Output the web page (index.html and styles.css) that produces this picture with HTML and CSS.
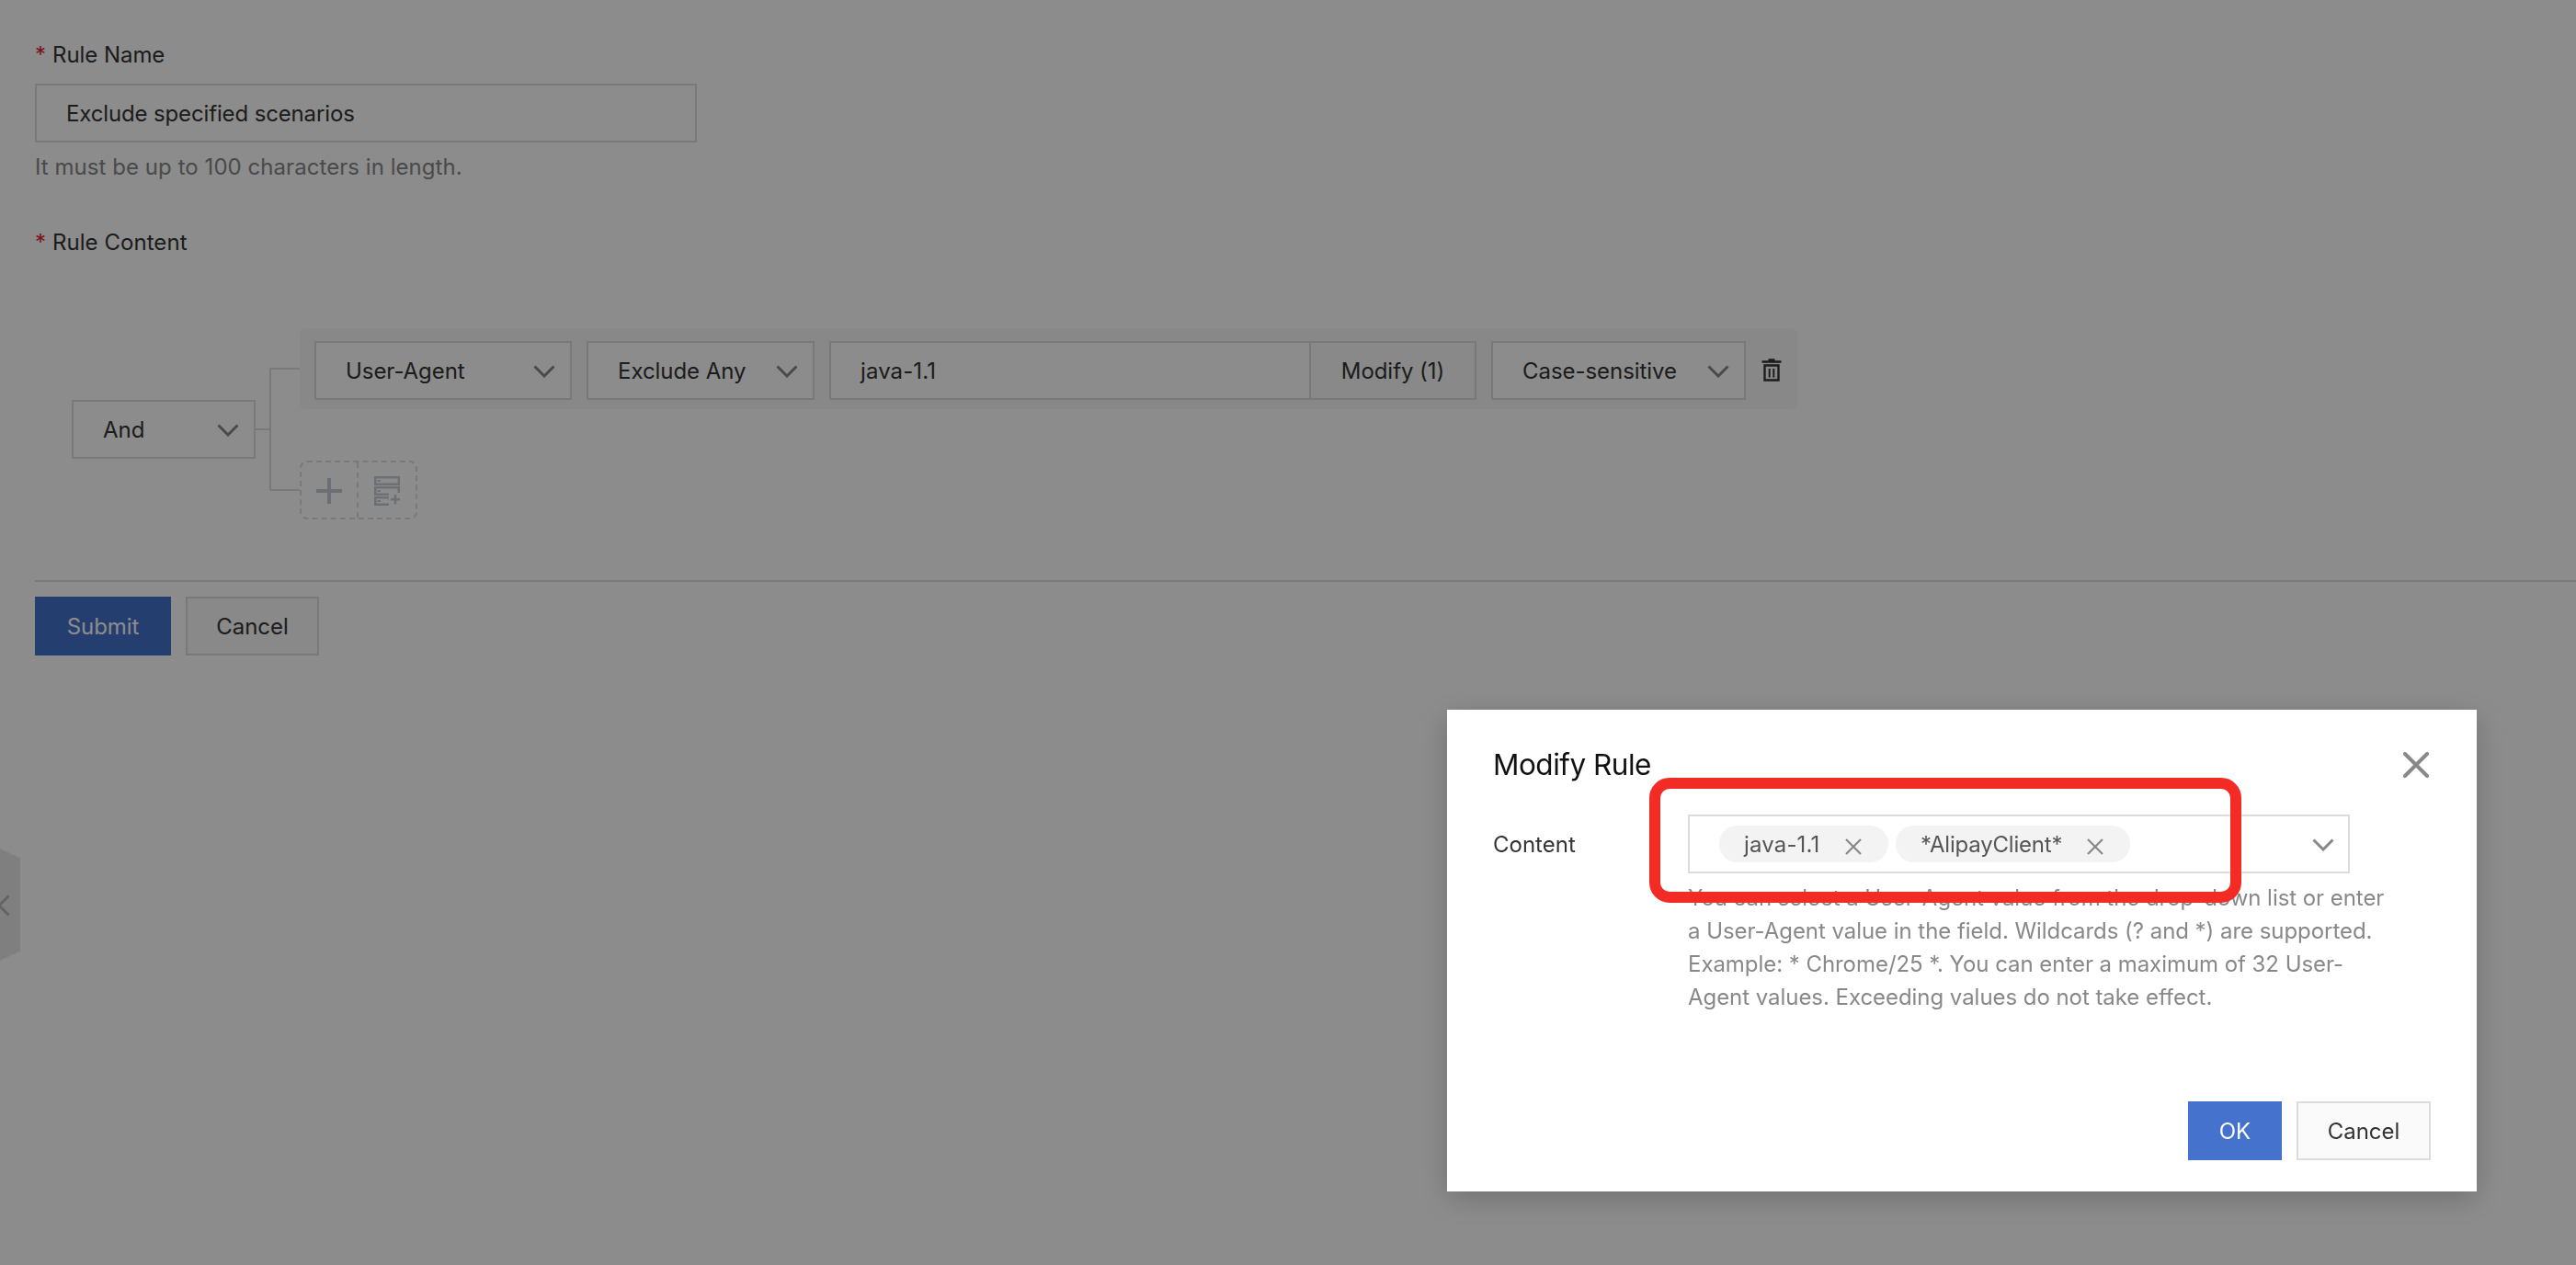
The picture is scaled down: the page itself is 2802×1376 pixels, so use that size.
FILE: index.html
```html
<!DOCTYPE html>
<html lang="en">
<head>
    <meta charset="UTF-8">
    <meta name="viewport" content="width=device-width, initial-scale=1.0">
    <title>Modify Rule</title>
    <link rel="stylesheet" href="styles.css">
</head>
<body>
    <main class="page">
        <div class="label"><span class="required">*</span><span>Rule Name</span></div>
        <div class="field name-field">Exclude specified scenarios</div>
        <p class="help">It must be up to 100 characters in length.</p>

        <div class="label content-label"><span class="required">*</span><span>Rule Content</span></div>
        <div class="rule">
            <div class="field select and-select">
                <span>And</span>
                <svg class="chevron" viewBox="0 0 24 14"><path d="M1.5 1.5L12 12L22.5 1.5"/></svg>
            </div>
            <div class="stem"></div>
            <div class="bracket"></div>
            <div class="branches">
                <div class="condition">
                    <div class="field select agent-select">
                        <span>User-Agent</span>
                        <svg class="chevron" viewBox="0 0 24 14"><path d="M1.5 1.5L12 12L22.5 1.5"/></svg>
                    </div>
                    <div class="field select match-select">
                        <span>Exclude Any</span>
                        <svg class="chevron" viewBox="0 0 24 14"><path d="M1.5 1.5L12 12L22.5 1.5"/></svg>
                    </div>
                    <div class="value-group">
                        <div class="field value-field">java-1.1</div>
                        <button type="button" class="btn modify-btn">Modify (1)</button>
                    </div>
                    <div class="field select case-select">
                        <span>Case-sensitive</span>
                        <svg class="chevron" viewBox="0 0 24 14"><path d="M1.5 1.5L12 12L22.5 1.5"/></svg>
                    </div>
                    <svg class="trash" viewBox="0 0 22 26">
                        <path d="M0.5 3.5H21.5M7.5 1.5H14.5" stroke-width="2.4"/>
                        <path d="M3.5 7.5H18.5V23.5H3.5Z" stroke-width="2.4"/>
                        <path d="M8.7 11V20.5M13.3 11V20.5" stroke-width="2"/>
                    </svg>
                </div>
                <div class="add-group">
                    <div class="add-item add-first">
                        <svg class="plus" viewBox="0 0 28 28"><path d="M14 0V28M0 14H28"/></svg>
                    </div>
                    <div class="add-item">
                        <svg class="add-list" viewBox="0 0 28 32">
                            <path d="M1.2 1.2H26.8V8.8H1.2Z"/>
                            <path d="M26.8 18V12.2H1.2V19.8H16"/>
                            <path d="M16 23.2H1.2V30.8H16"/>
                            <path d="M23 20V30.5M17.8 25.2H28.2"/>
                            <path d="M3.6 5H6.8M3.6 16H6.8M3.6 27H6.8" stroke-width="2"/>
                        </svg>
                    </div>
                </div>
            </div>
        </div>

        <div class="actions">
            <button type="button" class="btn primary submit-btn">Submit</button>
            <button type="button" class="btn cancel-btn">Cancel</button>
        </div>
    </main>

    <svg class="handle" viewBox="0 0 22 122">
        <path class="handle-bg" d="M0 0L22 10.5V111.5L0 122Z"/>
        <path class="handle-arrow" d="M9.5 51.5L-1 62L9.5 72.5"/>
    </svg>

    <div class="overlay"></div>

    <div class="modal">
        <div class="modal-header">
            <h2 class="modal-title">Modify Rule</h2>
            <svg class="close" viewBox="0 0 28 28"><path d="M2 2L26 26M26 2L2 26"/></svg>
        </div>
        <div class="modal-row">
            <div class="modal-label">Content</div>
            <div class="modal-control">
                <div class="field select tag-select">
                    <div class="tag tag-java">
                        <span>java-1.1</span>
                        <svg class="tag-close" viewBox="0 0 18 18"><path d="M1 1L17 17M17 1L1 17"/></svg>
                    </div>
                    <div class="tag tag-alipay">
                        <span>*AlipayClient*</span>
                        <svg class="tag-close" viewBox="0 0 18 18"><path d="M1 1L17 17M17 1L1 17"/></svg>
                    </div>
                    <svg class="chevron" viewBox="0 0 24 14"><path d="M1.5 1.5L12 12L22.5 1.5"/></svg>
                </div>
                <p class="help modal-help">
                    You can select a User-Agent value from the drop-down list or enter<br>
                    a User-Agent value in the field. Wildcards (? and *) are supported.<br>
                    Example: * Chrome/25 *. You can enter a maximum of 32 User-<br>
                    Agent values. Exceeding values do not take effect.
                </p>
            </div>
        </div>
        <div class="modal-footer">
            <button type="button" class="btn primary ok-btn">OK</button>
            <button type="button" class="btn modal-cancel">Cancel</button>
        </div>
        <div class="highlight"></div>
    </div>
</body>
</html>
```

FILE: styles.css
```css
* {
    box-sizing: border-box;
}
body {
    margin: 0;
    height: 100vh;
    overflow: hidden;
    background-color: #ffffff;
    color: #333333;
    font-family: 'Inter', 'Liberation Sans', sans-serif;
    font-size: 24px;
    line-height: 36px;
    letter-spacing: -0.05px;
    white-space: nowrap;
}
p, h2 {
    margin: 0;
}
svg {
    display: block;
    fill: none;
    flex-shrink: 0;
}
.page {
    padding: 42px 0 0 38px;
}
.label {
    display: flex;
    margin-bottom: 13px;
}
.required {
    width: 19px;
    color: #e0242b;
}
.content-label {
    margin-top: 46px;
    margin-bottom: 75px;
    letter-spacing: 0.05px;
}
.field {
    display: flex;
    align-items: center;
    height: 64px;
    padding: 2px 16px 0 32px;
    border: 2px solid #dcdcdc;
    background-color: #ffffff;
}
.select {
    justify-content: space-between;
}
.name-field {
    width: 720px;
    letter-spacing: -0.14px;
}
.help {
    margin-top: 9px;
    color: #888888;
    letter-spacing: 0.05px;
}
.chevron {
    width: 24px;
    height: 14px;
    stroke: #888888;
    stroke-width: 3;
}

/* rule tree */
.rule {
    display: flex;
    align-items: flex-start;
    margin-left: 40px;
}
.and-select {
    width: 200px;
    margin-top: 78px;
}
.stem {
    width: 15px;
    height: 2px;
    margin-top: 109px;
    background-color: #dcdcdc;
}
.bracket {
    width: 33px;
    height: 134px;
    margin-top: 43px;
    border: 2px solid #dcdcdc;
    border-right: 0;
    border-radius: 2px 0 0 2px;
}
.condition {
    display: flex;
    align-items: center;
    gap: 16px;
    width: 1629px;
    height: 88px;
    padding: 4px 0 0 16px;
    border-radius: 6px;
    background-color: #f7f7f7;
}
.agent-select {
    width: 280px;
}
.match-select {
    width: 248px;
}
.value-group {
    display: flex;
}
.value-field {
    width: 522px;
    border-right: 0;
    letter-spacing: 0.1px;
}
.case-select {
    width: 277px;
}
.trash {
    width: 22px;
    height: 26px;
    margin-left: 1px;
    stroke: #333333;
}
.add-group {
    display: flex;
    width: 128px;
    height: 64px;
    margin-top: 56px;
    border: 2px dashed #dcdcdc;
    border-radius: 8px;
}
.add-item {
    display: flex;
    flex: 1;
    align-items: center;
    justify-content: center;
    padding-top: 2px;
    stroke: #c5cdd4;
}
.add-first {
    flex: 0 0 62px;
    border-right: 2px dashed #dcdcdc;
}
.plus {
    width: 28px;
    height: 28px;
    stroke-width: 4;
}
.add-list {
    width: 28px;
    height: 32px;
    stroke-width: 2.6;
}

/* buttons */
.btn {
    height: 64px;
    padding: 2px 0 0;
    border: 2px solid #dcdcdc;
    background-color: #fafafa;
    color: #333333;
    font: inherit;
    letter-spacing: inherit;
}
.primary {
    border-color: #4472cd;
    background-color: #4472cd;
    color: #ffffff;
}
.modify-btn {
    width: 182px;
}
.actions {
    display: flex;
    gap: 16px;
    margin-top: 66px;
    padding-top: 16px;
    border-top: 2px solid #dcdcdc;
}
.submit-btn {
    width: 148px;
}
.cancel-btn {
    width: 145px;
}

/* collapse handle at the left edge */
.handle {
    position: absolute;
    left: 0;
    top: 923px;
    width: 22px;
    height: 122px;
}
.handle-bg {
    fill: #e8e8e8;
}
.handle-arrow {
    stroke: #b4b4b4;
    stroke-width: 3;
}
.overlay {
    position: fixed;
    inset: 0;
    background-color: rgba(0, 0, 0, 0.45);
}

/* dialog */
.modal {
    position: fixed;
    left: 1574px;
    top: 772px;
    display: flex;
    flex-direction: column;
    width: 1120px;
    height: 524px;
    padding: 36px 50px 34px;
    background-color: #ffffff;
    box-shadow: 0 8px 32px rgba(0, 0, 0, 0.2);
}
.modal-header {
    display: flex;
    align-items: center;
    justify-content: space-between;
    height: 48px;
}
.modal-title {
    color: #111111;
    font-size: 31.5px;
    font-weight: 400;
    letter-spacing: -0.5px;
}
.close {
    width: 28px;
    height: 28px;
    margin-right: 2px;
    stroke: #888888;
    stroke-width: 4;
    stroke-linecap: round;
}
.modal-row {
    display: flex;
    margin-top: 30px;
}
.modal-label {
    width: 212px;
    padding-top: 1px;
    line-height: 64px;
    letter-spacing: 0;
}
.modal-control {
    width: 720px;
}
.modal-help {
    letter-spacing: -0.05px;
}
.tag-select {
    justify-content: flex-start;
    gap: 8px;
    padding: 0 15px 0 32px;
}
.tag-select .chevron {
    margin-top: 1px;
    margin-left: auto;
}
.tag {
    display: flex;
    align-items: center;
    justify-content: space-between;
    height: 40px;
    padding: 2px 29px 0 27px;
    border-radius: 20px;
    background-color: #f3f3f3;
    color: #555555;
}
.tag-java {
    width: 184px;
    letter-spacing: 0.15px;
}
.tag-alipay {
    width: 255px;
    letter-spacing: -0.2px;
}
.tag-close {
    width: 18px;
    height: 18px;
    margin-top: 3px;
    stroke: #888888;
    stroke-width: 2.2;
}
.modal-footer {
    display: flex;
    justify-content: flex-end;
    gap: 16px;
    margin-top: auto;
}
.ok-btn {
    width: 102px;
}
.modal-cancel {
    width: 146px;
}
.highlight {
    position: absolute;
    left: 220px;
    top: 74px;
    width: 644px;
    height: 136px;
    border: 12px solid #f32b25;
    border-radius: 22px;
}
```
